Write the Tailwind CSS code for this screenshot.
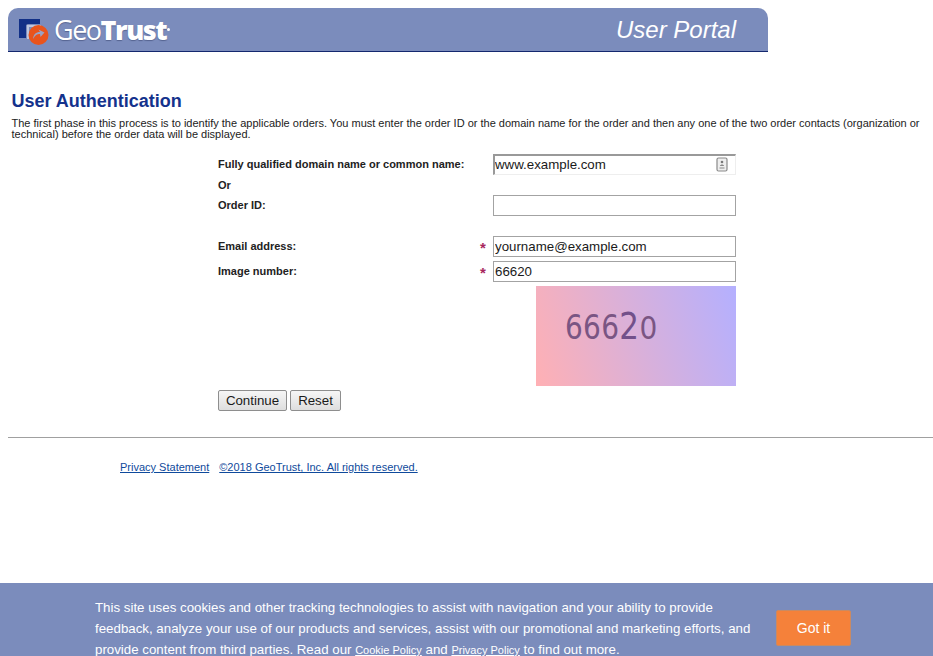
<!DOCTYPE html>
<html lang="en">
<head>
<meta charset="utf-8">
<title>User Portal</title>
<script src="https://cdn.jsdelivr.net/npm/@tailwindcss/browser@4"></script>
</head>
<body class="bg-white font-['Liberation_Sans',Arial,sans-serif] text-black h-[656px] overflow-hidden relative">
<div class="pt-2 pl-2">
  <header class="w-[760px] h-[44px] bg-[#7b8cbc] rounded-t-[10px] border-b border-[#14286e] flex items-center justify-between">
    <div class="flex items-center pl-[11px] pt-[3px]">
      <svg width="32" height="30" viewBox="0 0 32 30" class="mt-[4px]">
        <path d="M0 1H21V6H9C7.500 6 7 7 7 8V20H0Z" fill="#123087"/>
        <path d="M8 7H22V9H10V21H8Z" fill="#ffffff" opacity=".5"/>
        <circle cx="19.500" cy="17" r="10" fill="#e9541c"/>
        <path d="M14 21c.3-4.500 3-7 7-7l-1.500-2.500 6 3-4 4.500-.5-3c-2.500-.2-5 1-7 5z" fill="#9aa3c4"/>
      </svg>
      <span class="text-[27px] leading-none text-white tracking-[-1.5px] ml-[3px] mb-[3px] font-['Open_Sans',sans-serif] [text-shadow:0_1px_1px_rgba(40,50,90,.45)]">Geo<span class="font-extrabold">Trust</span></span>
      <span class="w-[3px] h-[3px] rounded-full bg-white ml-[1px] mb-[4px]"></span>
    </div>
    <div class="text-[24px] italic text-white pr-[32px]">User Portal</div>
  </header>
  <main class="pt-[39px]">
    <h1 class="pl-[3.500px] text-[18px] leading-[21px] font-bold text-[#14328c]">User Authentication</h1>
    <p class="pl-[3.500px] pr-[8px] pt-[6px] text-[11px] leading-[11px] text-[#222]">The first phase in this process is to identify the applicable orders. You must enter the order ID or the domain name for the order and then any one of the two order contacts (organization or technical) before the order data will be displayed.</p>
    <form class="pl-[210px] pt-[14px] w-[736px]">
      <div class="flex h-[21px]">
        <label class="w-[260px] text-[11px] font-bold leading-[20px] text-[#222]">Fully qualified domain name or common name:</label>
        <span class="w-[15px]"></span>
        <div class="relative w-[243px] h-[21px] bg-white border-t-2 border-l-2 border-[#999] border-r border-b border-r-[#eee] border-b-[#eee] flex items-center">
          <input type="text" value="www.example.com" class="w-full h-[18px] text-[13.300px] text-[#1a1a1a] outline-none">
          <svg width="12" height="15" viewBox="0 0 12 15" class="absolute right-[7px] top-[1px]">
            <rect x="1" y="1" width="10" height="13" rx="1.500" fill="#eee" stroke="#8a8a8a" stroke-width="1.200"/>
            <circle cx="6" cy="5" r="1.300" fill="#777"/>
            <path d="M4 9c0-2 4-2 4 0zM3.500 10.500h5v1h-5z" fill="#888"/>
          </svg>
        </div>
      </div>
      <div class="h-[19px] text-[11px] font-bold leading-[20px] text-[#222]">Or</div>
      <div class="flex h-[42px]">
        <label class="w-[260px] text-[11px] font-bold leading-[22px] text-[#222]">Order ID:</label>
        <span class="w-[15px]"></span>
        <input type="text" class="w-[243px] h-[21px] border border-[#a3a3a3] bg-white outline-none mt-[1px]">
      </div>
      <div class="flex h-[25px]">
        <label class="w-[260px] text-[11px] font-bold leading-[20px] text-[#222]">Email address:</label>
        <span class="w-[15px] pl-[2px] text-[#a8285e] text-[15px] font-bold leading-[23px]">*</span>
        <input type="text" value="yourname@example.com" class="w-[243px] h-[21px] pl-[1px] border border-[#a3a3a3] bg-white text-[13.300px] text-[#1a1a1a] outline-none">
      </div>
      <div class="flex h-[25px]">
        <label class="w-[260px] text-[11px] font-bold leading-[20px] text-[#222]">Image number:</label>
        <span class="w-[15px] pl-[2px] text-[#a8285e] text-[15px] font-bold leading-[23px]">*</span>
        <input type="text" value="66620" class="w-[243px] h-[21px] pl-[1px] border border-[#a3a3a3] bg-white text-[13.300px] text-[#1a1a1a] outline-none">
      </div>
      <div class="ml-[318px] w-[200px] h-[100px] bg-[linear-gradient(72deg,#ffb0b4,#b4b0ff)] flex items-baseline pt-[25px] pl-[29px] font-['DejaVu_Sans',sans-serif] text-[#7a5583] text-[28px] leading-[34px] tracking-[.3px]">
        <span class="inline-block scale-y-[1.2] origin-[50%_78%]">666</span><span class="inline-block text-[31px] leading-[34px] scale-y-[1.2] origin-[50%_78%] text-[#72508a]">2</span><span class="inline-block scale-y-[1.12] origin-[50%_78%]">0</span>
      </div>
      <div class="flex gap-[3px] pt-[4px]">
        <button type="button" class="w-[69px] h-[21px] rounded-[2px] border border-[#8e8e8e] bg-gradient-to-b from-[#f6f6f6] to-[#dedede] text-[13.300px] leading-none text-[#1a1a1a]">Continue</button>
        <button type="button" class="w-[51px] h-[21px] rounded-[2px] border border-[#8e8e8e] bg-gradient-to-b from-[#f6f6f6] to-[#dedede] text-[13.300px] leading-none text-[#1a1a1a]">Reset</button>
      </div>
    </form>
    <hr class="mt-[26px] border-t border-[#a0a0a0]">
    <footer class="pl-[112px] pt-[23px] flex gap-[10px] text-[11px] leading-[12px]">
      <a href="#" class="text-[#0f4a9c] underline">Privacy Statement</a>
      <a href="#" class="text-[#0f4a9c] underline">©2018 GeoTrust, Inc. All rights reserved.</a>
    </footer>
  </main>
</div>
<aside class="absolute left-0 right-0 top-[583px] h-[73px] bg-[#7b8cbc] overflow-hidden flex">
  <p class="pl-[95px] pt-[14px] w-[755px] shrink-0 text-[13.300px] leading-[21px] text-white">This site uses cookies and other tracking technologies to assist with navigation and your ability to provide feedback, analyze your use of our products and services, assist with our promotional and marketing efforts, and provide content from third parties. Read our <a href="#" class="text-[11px] underline">Cookie Policy</a> and <a href="#" class="text-[11px] underline">Privacy Policy</a> to find out more.</p>
  <button type="button" class="ml-[21px] mt-[27px] w-[75px] h-[36px] bg-[#f5813a] border border-[#c98a63] rounded-[2px] text-white text-[14px]">Got it</button>
</aside>
</body>
</html>
